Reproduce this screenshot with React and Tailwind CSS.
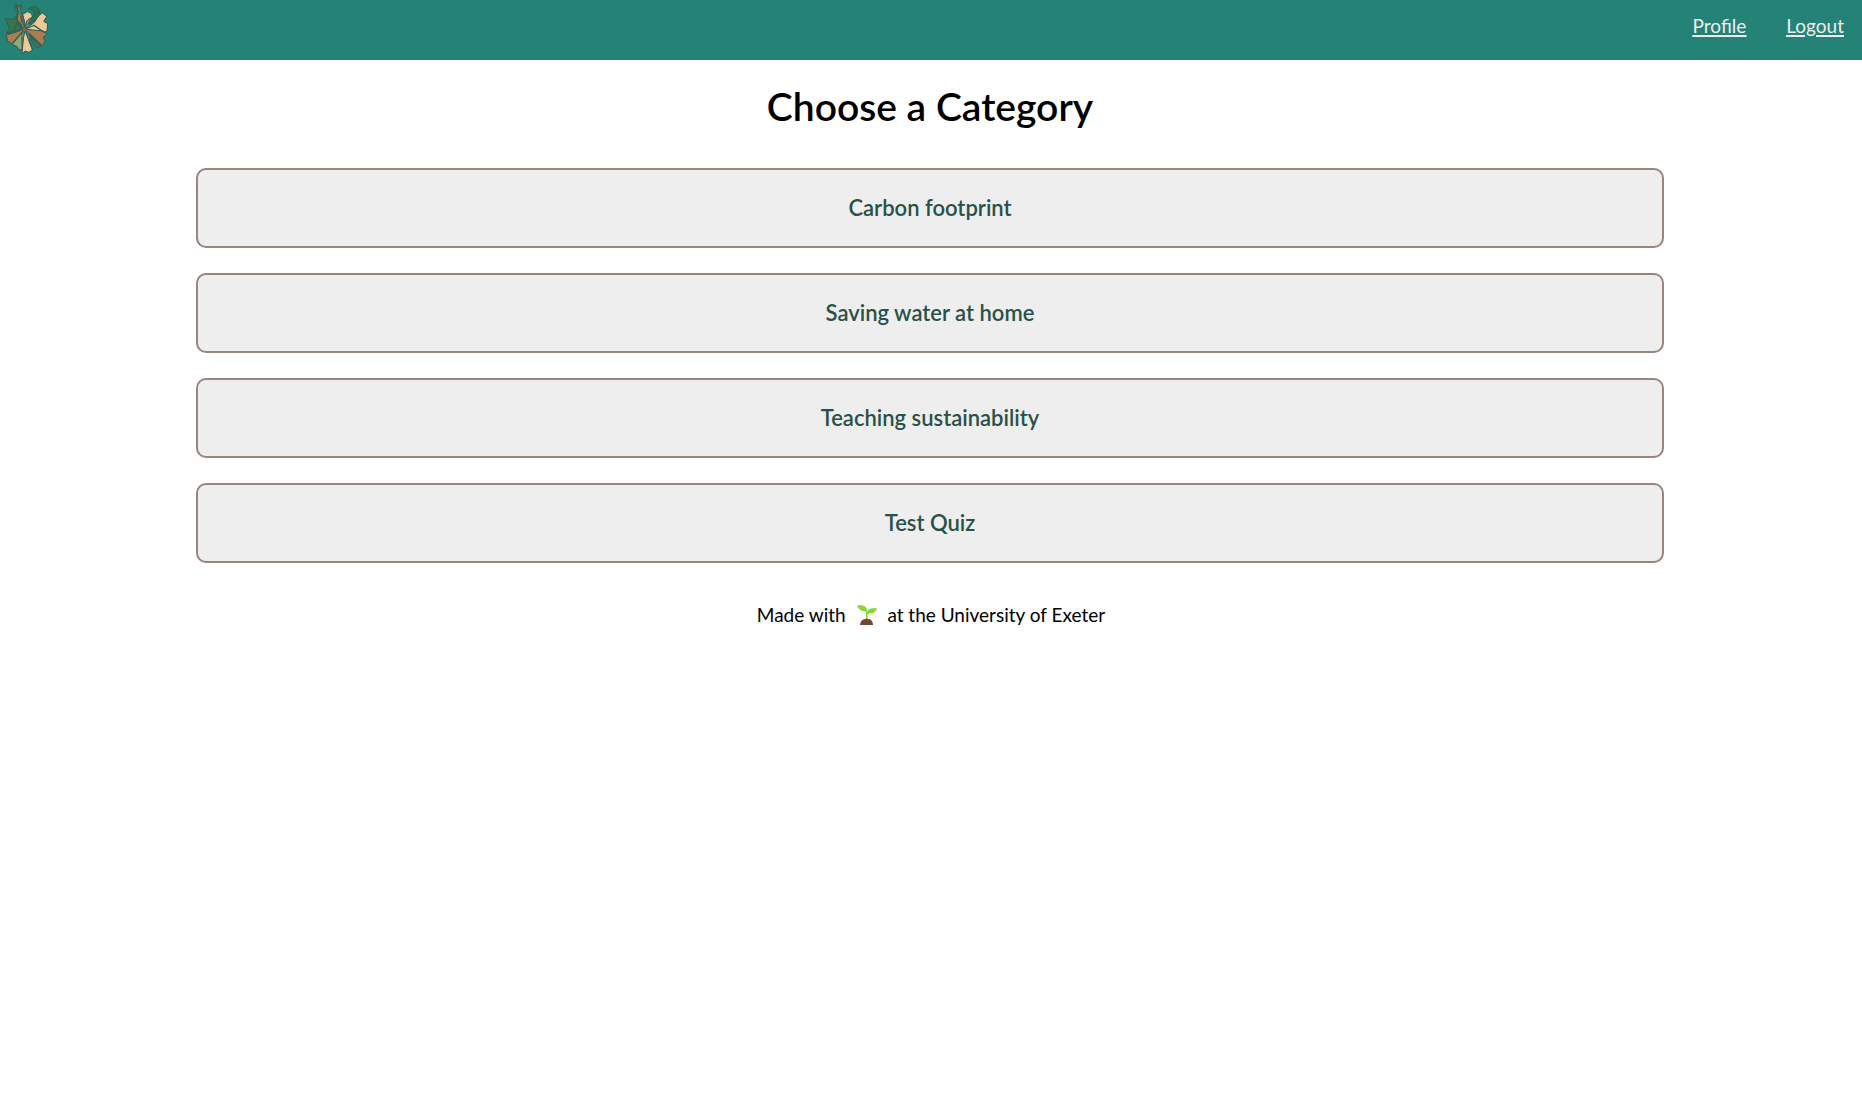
const categories = [
  'Carbon footprint',
  'Saving water at home',
  'Teaching sustainability',
  'Test Quiz',
];

function Logo() {
  return (
    <svg viewBox="0 0 180 180" className="size-15" aria-hidden="true">
      <g stroke="#2f5d52" strokeWidth="3" strokeLinejoin="round">
        <path d="M75 88 L66 44 L82 35 L94 40 L100 58 Z" fill="#f0c896" />
        <path d="M78 88 L104 66 L116 46 L128 39 L140 50 L131 64 L143 71 L141 93 L130 98 Z" fill="#f0c896" />
        <path d="M76 88 L131 93 L140 104 L129 112 L135 124 L127 137 Z" fill="#ae7c4f" />
        <path d="M76 92 L124 137 L112 144 L96 124 Z" fill="#48755a" />
        <path d="M75 92 L98 150 L86 157 L76 153 L66 160 L67 128 Z" fill="#f0c896" />
        <path d="M73 90 L67 149 L57 149 L50 139 L36 134 Z" fill="#91a778" />
        <path d="M72 88 L36 131 L23 123 L19 105 L40 99 Z" fill="#ae7c4f" />
        <path d="M70 86 L20 99 L28 84 L16 56 L38 58 L50 48 Z" fill="#38744f" />
        <path d="M72 82 L51 60 L51 40 L63 38 L73 66 Z" fill="#b27649" />
        <path d="M80 76 L92 58 L104 42 L99 31 L86 26 L104 18 L117 29 L119 44 L106 60 Z" fill="#2b724f" />
        <path d="M68 74 L61 45 L43 28 L47 11 L53 19 L62 14 L65 25 L58 32 L69 46 L76 74 Z" fill="#47755d" />
      </g>
      <g fill="none" stroke="#315f57" strokeWidth="4" strokeLinecap="round" strokeLinejoin="round">
        <path d="M48 16 L54 34 L51 62 L70 85 L66 111 L67 150" />
        <path d="M70 88 L50 70 L43 91 L23 101" />
        <path d="M74 91 L81 63 L96 52 M78 86 L102 76 L131 96" />
        <path d="M79 94 L95 115 L124 137 M77 91 L88 124 L97 148" />
      </g>
      <g fill="none" stroke="#83a18b" strokeWidth="2">
        <path d="M56 25 L61 47 M65 69 L72 86 L60 96 M80 69 L87 79 L101 78 M78 88 L84 100 L87 116 M69 94 L68 113" />
      </g>
      <path d="M67 83 L75 81 L80 88 L76 95 L69 96 Z" fill="#a45e3c" stroke="#315f57" strokeWidth="2" />
    </svg>
  );
}

function Seedling() {
  return (
    <svg viewBox="0 0 60 60" className="mx-1.5 inline-block size-5 align-[-3px]" role="img" aria-label="seedling">
      <path d="M29 45 V20" fill="none" stroke="#83d32e" strokeWidth="5" />
      <path d="M0 1 H13 Q28 1 31 19 Q8 23 0 1Z" fill="#83d832" />
      <path d="M60 10 Q56 26 38 25 Q33 25 30 31 L28 25 Q32 11 46 10Z" fill="#83d832" />
      <path d="M9 60 Q10 48 20 43 Q29 40 39 43 Q48 49 48 60Z" fill="#704634" />
    </svg>
  );
}

export default function App() {
  return (
    <div className="bg-white font-['Lato',sans-serif] text-black">
      <header className="flex h-15 items-start justify-between bg-[#248277]">
        <a href="#home" aria-label="Home">
          <Logo />
        </a>
        <nav className="flex gap-10 px-[18px] pt-3 text-[19px] leading-7 text-[#eeeeee] underline decoration-2 underline-offset-2">
          <a href="#profile">Profile</a>
          <a href="#logout">Logout</a>
        </nav>
      </header>
      <main className="pt-[22px] pr-[198px] pl-[196px] text-center">
        <h1 className="text-[39px] leading-12 font-semibold">Choose a Category</h1>
        <div className="mt-[38px] flex flex-col gap-[25px]">
          {categories.map((name) => (
            <button
              key={name}
              type="button"
              className="h-20 w-full rounded-[10px] border-2 border-[#99857e] bg-[#eeeeee] pb-0.5 text-[22px] font-semibold text-[#2a5149]"
            >
              {name}
            </button>
          ))}
        </div>
      </main>
      <footer className="mt-[38px] text-center text-[19px] leading-7">
        Made with <Seedling /> at the University of Exeter
      </footer>
    </div>
  );
}
